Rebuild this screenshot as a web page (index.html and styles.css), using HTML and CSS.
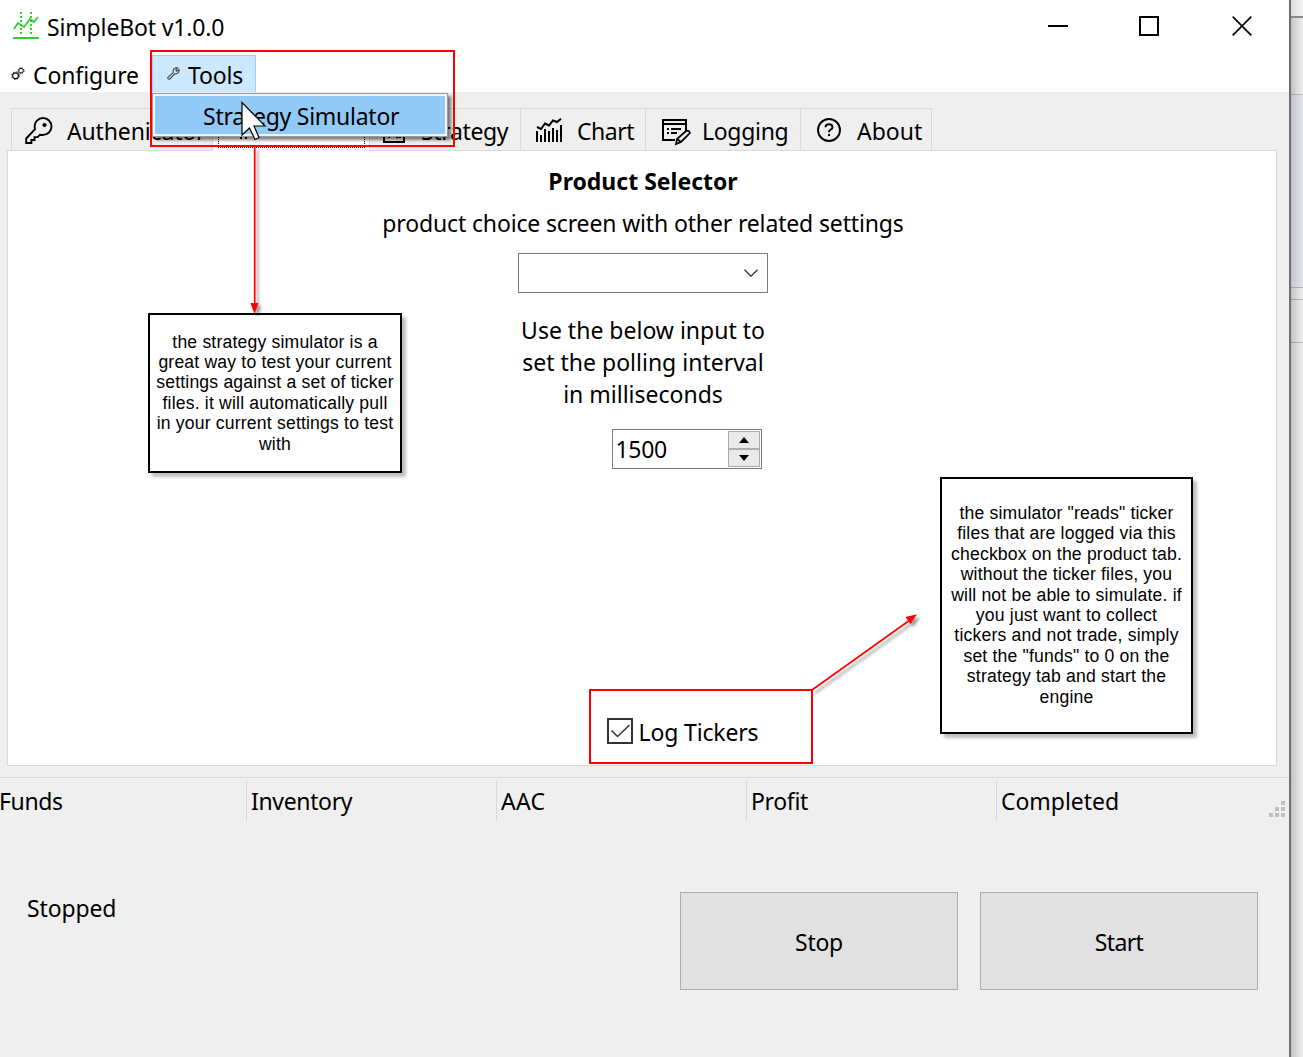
FILE: index.html
```html
<!DOCTYPE html>
<html lang="en">
<head>
<meta charset="utf-8">
<title>SimpleBot v1.0.0</title>
<link rel="stylesheet" href="styles.css">
</head>
<body>
<div class="desktop">
  <main class="window">
    <header class="titlebar">
      <svg class="app-icon" width="26" height="28" viewBox="0 0 26 28" fill="none" stroke="#32cd32">
        <path d="M0 26h26" stroke-width="2"/>
        <path d="M8 0v22M18 0v22" stroke-width="2" stroke-dasharray="2 2"/>
        <path d="M1 17l4-6 6 4 6-8 4 3 4-5" stroke-width="1.8"/>
      </svg>
      <span class="app-name">SimpleBot v1.0.0</span>
      <div class="controls">
        <svg width="20" height="20" viewBox="0 0 20 20"><path d="M0 10h20" stroke="#000" stroke-width="2"/></svg>
        <svg width="20" height="20" viewBox="0 0 20 20"><path d="M1 1h18v18H1z" fill="none" stroke="#000" stroke-width="2"/></svg>
        <svg width="20" height="20" viewBox="0 0 20 20"><path d="M.7.7l18.6 18.6M19.3.7L.7 19.3" stroke="#000" stroke-width="1.7"/></svg>
      </div>
    </header>
    <nav class="menubar">
      <div class="menu configure">
        <svg width="14" height="14" viewBox="0 0 14 14" fill="none" stroke="#111">
          <circle cx="4.5" cy="8.7" r="2.9" stroke-width="1.2"/><circle cx="4.5" cy="8.7" r="3.8" stroke-width="1" stroke-dasharray="1.4 1.6"/>
          <circle cx="10" cy="3.7" r="2.3" stroke-width="1"/><circle cx="10" cy="3.7" r="3" stroke-width="1" stroke-dasharray="1.2 1.2"/>
        </svg>
        <span>Configure</span>
      </div>
      <div class="menu tools">
        <svg width="13" height="13" viewBox="0 0 13 13" fill="none" stroke="#444" stroke-width="1.1"><path d="M1.1 10.2L6.3 5.6Q5.5 2.2 8.1 1.1 9.4.5 10.7.9L8.8 3l.9 1.3 2.4-1.7Q12.4 5 10.8 6.1 9.4 7.1 7.7 6.8L2.8 12Q1.8 12.4 1 11.6.5 10.8 1.1 10.2z"/></svg>
        <span>Tools</span>
      </div>
    </nav>
    <section class="workspace">
      <div class="tabs">
        <div class="tab tab-auth">
          <svg width="28" height="28" viewBox="0 0 28 28" fill="none" stroke="#000" stroke-width="1.9"><path d="M10 12.2Q8.700 7 12 3.600 14.500 1 18 1q3.500 0 6 2.500T26.500 9.500q0 3.500-2.500 6Q20.500 18.700 15 17.700l-2.300 2.400H9.500V23H6.400v3H1.200v-4.500z"/><circle cx="19.500" cy="8" r="1.600" fill="#000" stroke-width="1"/></svg>
          <span>Authenicator</span>
        </div>
        <div class="tab tab-product"><div class="focus"><svg width="10" height="26" viewBox="0 0 10 26"><path d="M2 20v5M7 20v5" stroke="#000" stroke-width="2"/></svg></div></div>
        <div class="tab tab-strategy">
          <svg width="22" height="28" viewBox="0 0 22 28" fill="none" stroke="#000" stroke-width="2"><path d="M1 3h20v24H1zM6 20v3M12 20l3 3M17 20v3"/></svg>
          <span>Strategy</span>
        </div>
        <div class="tab tab-chart">
          <svg width="27" height="24" viewBox="0 0 27 24" fill="none" stroke="#000"><path d="M2 24V13M6 24v-7M10 24V11M14 24V13M18 24V10M22 24V12M26 24V7" stroke-width="2"/><path d="M2 9l4 2 4-5.500 4 2 4-5 4 1.500L26 .8" stroke-width="2"/></svg>
          <span>Chart</span>
        </div>
        <div class="tab tab-logging">
          <svg width="29" height="28" viewBox="0 0 29 28" fill="none" stroke="#000" stroke-width="2"><path d="M13 22H1V2h23v11M1 6h23"/><path d="M5 11h2M9 11h10M5 15h2M9 15h6" /><path d="M14 26l1-5 9-8q3-1 4 2l-9 9zM15 21l4 3" stroke-width="1.800"/></svg>
          <span>Logging</span>
        </div>
        <div class="tab tab-about">
          <svg width="24" height="24" viewBox="0 0 24 24" fill="none" stroke="#000" stroke-width="1.900"><circle cx="12" cy="12" r="11"/><path d="M8.500 9.300q0-3 3.500-3t3.500 2.900q0 1.600-1.900 2.400-1.600.7-1.600 2.700M12 16v2"/></svg>
          <span>About</span>
        </div>
      </div>
      <div class="page">
        <h1>Product Selector</h1>
        <p class="subtitle">product choice screen with other related settings</p>
        <div class="combo"><svg width="14" height="8" viewBox="0 0 14 8"><path d="M.5.7L7 7.200 13.500.7" fill="none" stroke="#333" stroke-width="1.300"/></svg></div>
        <p class="hint">Use the below input to<br>set the polling interval<br>in milliseconds</p>
        <div class="spinner">
          <span>1500</span>
          <div class="arrows">
            <div><svg width="10" height="6" viewBox="0 0 10 6"><path d="M0 6L5 0l5 6z"/></svg></div>
            <div><svg width="10" height="6" viewBox="0 0 10 6"><path d="M0 0l5 6 5-6z"/></svg></div>
          </div>
        </div>
        <label class="check">
          <svg width="26" height="26" viewBox="0 0 26 26" fill="none" stroke="#333"><path d="M1 1h24v24H1z" stroke-width="2"/><path d="M4.500 12.500l6 6L22.500 7" stroke-width="1.500"/></svg>
          <span>Log Tickers</span>
        </label>
      </div>
    </section>
    <div class="status">
      <div>Funds</div><div>Inventory</div><div class="aac">AAC</div><div>Profit</div><div class="completed">Completed</div>
      <svg class="grip" width="16" height="16" viewBox="0 0 16 16" fill="#bfbfbf"><path d="M12 0h4v4h-4zM6 6h4v4H6zM12 6h4v4h-4zM0 12h4v4H0zM6 12h4v4H6zM12 12h4v4h-4z"/></svg>
    </div>
    <footer class="actions">
      <span class="state">Stopped</span>
      <div class="button">Stop</div>
      <div class="button start">Start</div>
    </footer>
  </main>
  <aside class="behind"><i class="b1"></i><i class="b2"></i><i class="b3"></i><i class="b4"></i><i class="b5"></i><i class="b6"></i></aside>

  <div class="dropdown"><div class="dropdown-item">Strategy Simulator</div></div>
  <div class="mark mark-tools"></div>
  <div class="mark mark-log"></div>
  <div class="note note-sim">the strategy simulator is a<br>great way to test your current<br>settings against a set of ticker<br>files. it will automatically pull<br>in your current settings to test<br>with</div>
  <div class="note note-log">the simulator "reads" ticker<br>files that are logged via this<br>checkbox on the product tab.<br>without the ticker files, you<br>will not be able to simulate. if<br>you just want to collect<br>tickers and not trade, simply<br>set the "funds" to 0 on the<br>strategy tab and start the<br>engine</div>
  <svg class="arrows-layer" width="1303" height="1057" viewBox="0 0 1303 1057">
    <g class="arrow"><path d="M254.700 147v158" stroke="#f00" stroke-width="1.700"/><path d="M250.500 303h8l-4 11z" fill="#f00"/></g>
    <g class="arrow"><path d="M812 690l98-70" stroke="#f00" stroke-width="1.700"/><path d="M917 614.300l-11.500 2.700 5 7z" fill="#f00"/></g>
  </svg>
  <svg class="cursor" width="26" height="40" viewBox="0 0 26 40"><path d="M1 1.500v32.500l7.500-7 5.500 11.500 4-2-5-11.500h11z" fill="#fff" stroke="#000" stroke-width="1.200"/></svg>
</div>
</body>
</html>
```
FILE: styles.css
```css
* { box-sizing: border-box; }
body { margin: 0; overflow: hidden; font-family: "Noto Sans", "Open Sans", sans-serif; font-size: 23px; line-height: 32px; letter-spacing: -.15px; color: #000; }
h1, p { margin: 0; font-size: inherit; white-space: nowrap; }
span, .menu, .tab { white-space: nowrap; }
svg { display: block; flex: none; }
.desktop { position: relative; display: flex; width: 1303px; height: 1057px; overflow: hidden; }
.window { width: 1291px; height: 1057px; border-right: 2px solid #6e6e6e; background: #efefef; display: flex; flex-direction: column; }

.titlebar { height: 55px; background: #fff; display: flex; align-items: flex-start; padding: 11px 37px 0 13px; flex: none; }
.app-icon { margin-top: 1px; }
.app-name { margin-left: 8px; }
.controls { margin-left: auto; display: flex; gap: 71px; padding-top: 5px; }
.controls svg:last-child { margin-left: 2px; }

.menubar { height: 37px; background: #fff; display: flex; flex: none; }
.menu { display: flex; padding-top: 4px; }
.configure { width: 152px; padding-left: 11px; }
.configure svg { margin-top: 8px; }
.configure span { margin-left: 8px; letter-spacing: -.1px; }
.tools { width: 104px; background: #cce8ff; border: 1px solid #99d1ff; border-bottom: 0; padding: 3px 0 0 14px; }
.tools svg { margin-top: 8px; }
.tools span { margin-left: 8px; }

.workspace { padding: 16px 12px 0 7px; flex: none; height: 685px; }
.tabs { display: flex; padding-left: 4px; height: 43px; margin-bottom: -1px; position: relative; }
.tab { display: flex; border: 1px solid #d9d9d9; border-left: 0; height: 43px; padding-top: 6px; }
.tab-auth { width: 202px; border-left: 1px solid #d9d9d9; padding-left: 13px; }
.tab-auth svg { margin-top: 2px; }
.tab-auth span { margin-left: 14px; }
.tab-product { width: 157px; background: #fff; padding: 4px 4px 0 5px; border-bottom: 0; }
.focus { width: 147px; height: 35px; border: 1px dotted #000; padding-left: 20px; }
.tab-strategy { width: 151px; padding-left: 13px; }
.tab-strategy span { margin-left: 16px; letter-spacing: -.35px; }
.tab-chart { width: 125px; padding-left: 14px; }
.tab-chart svg { margin-top: 3px; }
.tab-chart span { margin-left: 15px; letter-spacing: -.5px; }
.tab-logging { width: 155px; padding-left: 16px; }
.tab-logging svg { margin-top: 3px; }
.tab-logging span { margin-left: 11px; letter-spacing: -.3px; }
.tab-about { width: 131px; padding-left: 16px; }
.tab-about svg { margin-top: 3px; }
.tab-about span { margin-left: 16px; letter-spacing: 0; }

.page { height: 616px; border: 1px solid #d9d9d9; background: #fff; display: flex; flex-direction: column; align-items: center; padding: 14px 0 0 2px; text-align: center; }
h1 { font-weight: 700; font-size: 23px; letter-spacing: 0; }
.subtitle { margin-top: 10px; }
.combo { width: 250px; height: 40px; border: 1px solid #7a7a7a; margin-top: 14px; padding: 15px 9px; display: flex; justify-content: flex-end; }
.hint { margin-top: 21px; letter-spacing: 0; }
.spinner { width: 150px; height: 40px; border: 1px solid #7a7a7a; margin: 19px 0 0 87px; padding: 1px 1px 1px 3px; display: flex; justify-content: space-between; letter-spacing: -.3px; }
.spinner span { padding-top: 2px; }
.arrows { width: 32px; display: flex; flex-direction: column; }
.arrows div { height: 18px; border: 1px solid #adadad; background: #e9e9e9; display: flex; align-items: center; justify-content: center; }
.check { display: flex; margin: 247px 0 0 77px; width: 150px; }
.check svg { margin-top: 2px; }
.check span { margin-left: 6px; }

.status { flex: none; height: 44px; border-top: 1px solid #d9d9d9; padding-top: 2px; display: flex; }
.status div { width: 250px; height: 41px; border-left: 1px solid #d9d9d9; padding: 5px 0 0 4px; letter-spacing: -.35px; }
.status div:first-child { width: 247px; border: 0; padding-left: 0; margin-left: -1px; }
.status .aac { letter-spacing: .3px; }
.status .completed { width: 273px; letter-spacing: -.05px; }
.grip { margin-top: 21px; }

.actions { display: flex; padding: 71px 31px 0 27px; }
.state { flex: 1; }
.button { width: 278px; height: 98px; border: 1px solid #adadad; background: #e1e1e1; text-align: center; line-height: 98px; margin-left: 22px; letter-spacing: -.3px; }
.start { letter-spacing: -.6px; }

.behind { width: 12px; height: 1057px; display: flex; flex-direction: column; background-image: linear-gradient(90deg, #c4c4c4, #efefef); }
.behind i { display: block; flex: none; border-bottom: 1px solid rgba(0,0,0,.2); }
.b1 { height: 18px; background: rgba(255,255,255,.4); }
.behind .b1 { border-bottom: 2px solid #8b8b8b; }
.b2 { height: 77px; }
.b3 { height: 193px; background: rgba(190,205,220,.25); }
.b4 { height: 12px; }
.b5 { height: 43px; }
.behind .b6 { height: 714px; border: 0; }

.dropdown { position: absolute; left: 152px; top: 93px; width: 296px; height: 44px; border: 1px solid #999; background: #f2f2f2; padding: 2px; box-shadow: 3px 3px 3px rgba(0,0,0,.5); }
.dropdown-item { height: 38px; background: #91c9f7; padding: 4px 0 0 48px; white-space: nowrap; letter-spacing: -.25px; }
.mark { position: absolute; border: 2px solid #f00; }
.mark-tools { left: 150px; top: 50px; width: 305px; height: 97px; }
.mark-log { left: 589px; top: 689px; width: 224px; height: 75px; }
.note { position: absolute; border: 2px solid #000; background: #fff; box-shadow: 4px 4px 3px rgba(0,0,0,.25); font: 17.600px/20.400px "Liberation Sans", Arial, sans-serif; letter-spacing: .18px; text-align: center; white-space: nowrap; }
.note-sim { left: 148px; top: 313px; width: 254px; height: 160px; padding-top: 16.500px; }
.note-log { left: 940px; top: 477px; width: 253px; height: 257px; padding-top: 24px; }
.arrows-layer { position: absolute; left: 0; top: 0; }
.arrow { filter: drop-shadow(3px 3px 1.500px rgba(0,0,0,.4)); }
.cursor { position: absolute; left: 241px; top: 101px; }
```
